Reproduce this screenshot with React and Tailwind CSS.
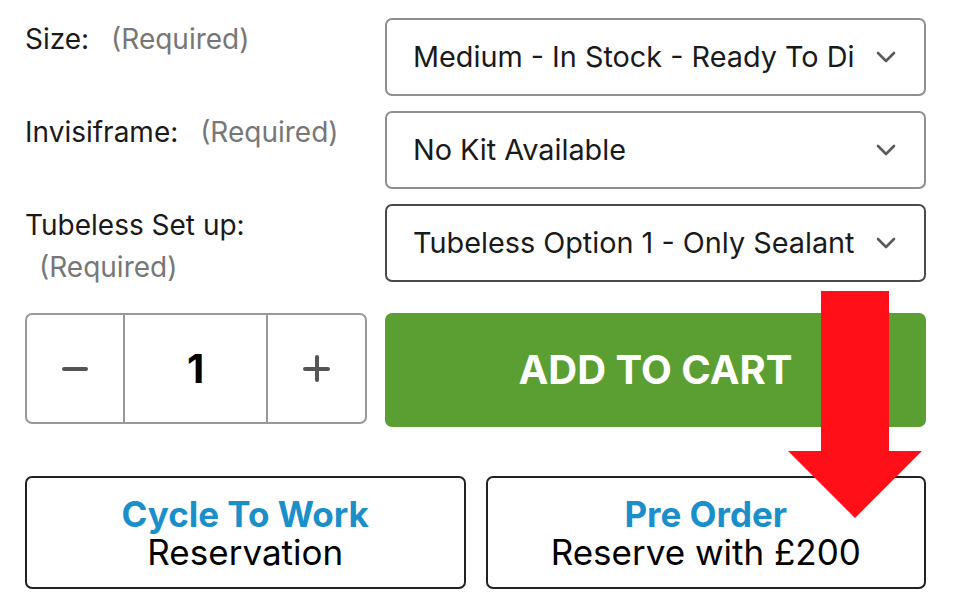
import React from 'react';

const options = [
  { label: 'Size:', value: 'Medium - In Stock - Ready To Dispatch', dark: false },
  { label: 'Invisiframe:', value: 'No Kit Available', dark: false },
  { label: 'Tubeless Set up:', value: 'Tubeless Option 1 - Only Sealant', dark: true },
];

const Chevron = () => (
  <svg width="20" height="12" viewBox="0 0 20 12" className="shrink-0">
    <polyline points="2,2 10,10 18,2" fill="none" stroke="#5a5a5a" strokeWidth="2.6" strokeLinecap="round" strokeLinejoin="round" />
  </svg>
);

const App = () => {
  return (
    <div className="relative w-[966px] h-[600px] bg-white overflow-hidden font-['Inter',sans-serif] text-[#1a1a1a]">
      <div className="pl-[25px] pt-[18px] w-[926px]">
        {options.map((opt, i) => (
          <div key={opt.label} className={`flex items-start gap-[18px] ${i < 2 ? 'mb-[15px]' : 'mb-[25px]'}`}>
            <div className="w-[342px] shrink-0 text-[28px] leading-[42px]">
              {opt.label}{' '}
              <span className="ml-[14px] text-[#777]">(Required)</span>
            </div>
            <div
              className={`flex-1 min-w-0 h-[78px] flex items-center pl-[26px] pr-[28px] rounded-[7px] border-2 ${opt.dark ? 'border-[#4a4a4a]' : 'border-[#8f8f8f]'}`}
            >
              <div className="flex-1 min-w-0 overflow-hidden whitespace-nowrap text-[28.8px] mr-[22px]">{opt.value}</div>
              <Chevron />
            </div>
          </div>
        ))}

        <div className="flex items-start gap-[18px]">
          <div className="w-[342px] shrink-0 h-[111px] flex rounded-[7px] border-2 border-[#999]">
            <div className="w-[98px] flex items-center justify-center border-r-2 border-[#999]">
              <div className="w-[26px] h-[4px] rounded-full bg-[#555]" />
            </div>
            <div className="w-[143px] flex items-center justify-center border-r-2 border-[#999] text-[40px] font-bold text-black">
              1
            </div>
            <div className="flex-1 flex items-center justify-center">
              <div className="relative w-[27px] h-[27px]">
                <div className="absolute left-0 top-[11.5px] w-[27px] h-[4px] rounded-full bg-[#555]" />
                <div className="absolute top-0 left-[11.5px] w-[4px] h-[27px] rounded-full bg-[#555]" />
              </div>
            </div>
          </div>
          <button className="flex-1 h-[114px] rounded-[7px] bg-[#5b9f33] text-white text-[40px] font-bold">
            ADD TO CART
          </button>
        </div>

        <div className="grid grid-cols-2 gap-[20px] mt-[49px]">
          <button className="h-[113px] rounded-[7px] border-2 border-[#222] flex flex-col items-center justify-center">
            <span className="text-[35px] leading-[38px] font-bold text-[#1a8fca]">Cycle To Work</span>
            <span className="text-[35px] leading-[38px] text-black">Reservation</span>
          </button>
          <button className="h-[113px] rounded-[7px] border-2 border-[#222] flex flex-col items-center justify-center">
            <span className="text-[35px] leading-[38px] font-bold text-[#1a8fca]">Pre Order</span>
            <span className="text-[35px] leading-[38px] text-black">Reserve with £200</span>
          </button>
        </div>
      </div>

      <svg className="absolute left-[788px] top-[291px]" width="134" height="228" viewBox="0 0 134 228">
        <polygon points="33,0 101,0 101,160 134,160 67,227 0,160 33,160" fill="#ff0f17" />
      </svg>
    </div>
  );
};

export default App;
